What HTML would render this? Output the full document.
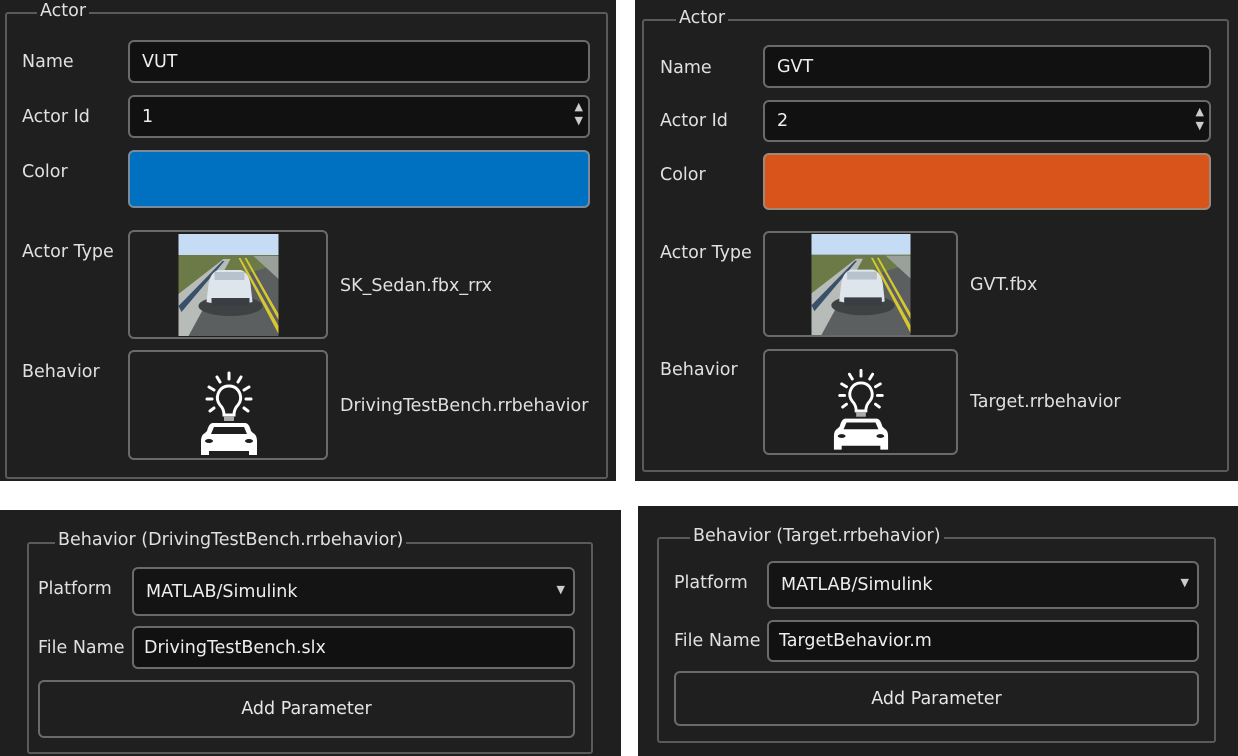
<!DOCTYPE html>
<html><head><meta charset="utf-8"><style>
*{box-sizing:border-box;margin:0;padding:0}
body{width:1238px;height:756px;background:#fff;position:relative;overflow:hidden;font-family:"DejaVu Sans","Liberation Sans",sans-serif;font-size:17.5px;color:#e6e6e6}
.a{position:absolute}
.p{position:absolute;background:#1f1f1f}
.g{position:absolute;border:2px solid #5a5a5a;border-radius:3px}
.gl{position:absolute;background:#1f1f1f;padding:0 3px;line-height:20px;color:#e0e0e0}
.f{position:absolute;background:#111;border:2px solid #6a6a6a;border-radius:6px;padding-left:12px;display:flex;align-items:center;color:#eee}
.b{position:absolute;border:2px solid #6a6a6a;border-radius:6px;background:#1f1f1f}
.l{position:absolute;line-height:20px;color:#e0e0e0}
.btn{position:absolute;border:2px solid #6a6a6a;border-radius:6px;display:flex;align-items:center;justify-content:center;color:#e6e6e6}
</style></head><body>
<svg width="0" height="0" style="position:absolute">
<defs>
<symbol id="scene" viewBox="0 0 100 102">
<rect width="100" height="102" fill="#5b5f5f"/>
<rect width="100" height="21" fill="#c6dcf5"/>
<polygon points="0,21 100,21 100,30 0,60" fill="#6c7a48"/>
<polygon points="0,60 45,25 52,25 10,102 0,102" fill="#b8bcb8"/>
<polygon points="0,72 44,27 46,27 3,78" fill="#38506a"/>
<polygon points="60,24 62,24 100,92 100,100" fill="#d8c830"/>
<polygon points="66,24 68,24 100,80 100,86" fill="#d8c830"/>
<polygon points="75,22 100,22 100,45" fill="#9aa09a"/>
<ellipse cx="52" cy="72" rx="32" ry="10" fill="#3e4242"/>
<path d="M30 50 Q32 38 40 36 L62 36 Q70 38 72 50 L74 68 Q52 74 28 68Z" fill="#dfe5ec"/>
<rect x="36" y="38" width="30" height="8" fill="#b8c2cc"/>
<rect x="33" y="64" width="38" height="8" fill="#3a3e44"/>
</symbol>
<symbol id="beh" viewBox="0 0 60 84">
<g stroke="#fff" stroke-width="3" fill="none" stroke-linecap="round">
<line x1="30" y1="2" x2="30" y2="8"/><line x1="18" y1="6" x2="21" y2="11"/><line x1="42" y1="6" x2="39" y2="11"/>
<line x1="10" y1="16" x2="15" y2="19"/><line x1="50" y1="16" x2="45" y2="19"/>
<line x1="8" y1="28" x2="13" y2="28"/><line x1="52" y1="28" x2="47" y2="28"/>
<line x1="11" y1="40" x2="15" y2="37"/><line x1="49" y1="40" x2="45" y2="37"/>
<path d="M25 44 Q25 38 21 34 Q17 29 19 23 Q22 15 30 15 Q38 15 41 23 Q43 29 39 34 Q35 38 35 44Z"/>
</g>
<rect x="25" y="45" width="10" height="5" fill="#aaa"/>
<path d="M14 52 L46 52 Q50 52 52 60 L54 62 Q58 64 58 70 L58 84 L50 84 L50 80 L10 80 L10 84 L2 84 L2 70 Q2 64 6 62 L8 60 Q10 52 14 52Z" fill="#fff"/>
<path d="M15 56 L45 56 L48 63 L12 63Z" fill="#1f1f1f"/>
<ellipse cx="10" cy="70" rx="4" ry="2" fill="#1f1f1f"/><ellipse cx="50" cy="70" rx="4" ry="2" fill="#1f1f1f"/>
</symbol>
</defs></svg>

<div class="p" style="left:0;top:0;width:616px;height:481px"></div>
<div class="g" style="left:5px;top:12px;width:603px;height:467px"></div>
<div class="gl" style="left:37px;top:1px">Actor</div>
<div class="l" style="left:22px;top:52px">Name</div>
<div class="f" style="left:128px;top:40px;width:462px;height:43px">VUT</div>
<div class="l" style="left:22px;top:107px">Actor Id</div>
<div class="f" style="left:128px;top:95px;width:462px;height:43px">1<span class="a" style="right:5px;top:3px;font-size:11px;line-height:14px;color:#ccc">▲<br>▼</span></div>
<div class="l" style="left:22px;top:162px">Color</div>
<div class="a" style="left:128px;top:150px;width:462px;height:58px;background:#0070c0;border:2px solid #7a8a9a;border-radius:6px"></div>
<div class="l" style="left:22px;top:242px">Actor Type</div>
<div class="b" style="left:128px;top:230px;width:200px;height:109px"></div>
<svg class="a" style="left:178px;top:234px" width="101" height="102"><use href="#scene"/></svg>
<div class="l" style="left:340px;top:276px">SK_Sedan.fbx_rrx</div>
<div class="l" style="left:22px;top:362px">Behavior</div>
<div class="b" style="left:128px;top:350px;width:200px;height:110px"></div>
<svg class="a" style="left:199px;top:371px" width="60" height="84"><use href="#beh"/></svg>
<div class="l" style="left:340px;top:396px">DrivingTestBench.rrbehavior</div>

<div class="p" style="left:635px;top:0;width:603px;height:481px"></div>
<div class="g" style="left:642px;top:19px;width:587px;height:453px"></div>
<div class="gl" style="left:676px;top:8px">Actor</div>
<div class="l" style="left:660px;top:58px">Name</div>
<div class="f" style="left:763px;top:45px;width:448px;height:43px">GVT</div>
<div class="l" style="left:660px;top:111px">Actor Id</div>
<div class="f" style="left:763px;top:100px;width:448px;height:42px">2<span class="a" style="right:5px;top:3px;font-size:11px;line-height:14px;color:#ccc">▲<br>▼</span></div>
<div class="l" style="left:660px;top:165px">Color</div>
<div class="a" style="left:763px;top:153px;width:448px;height:57px;background:#d9541a;border:2px solid #9a8a7a;border-radius:6px"></div>
<div class="l" style="left:660px;top:243px">Actor Type</div>
<div class="b" style="left:763px;top:231px;width:195px;height:106px"></div>
<svg class="a" style="left:811px;top:234px" width="100" height="101"><use href="#scene"/></svg>
<div class="l" style="left:970px;top:275px">GVT.fbx</div>
<div class="l" style="left:660px;top:360px">Behavior</div>
<div class="b" style="left:763px;top:349px;width:195px;height:106px"></div>
<svg class="a" style="left:832px;top:368px" width="58" height="82"><use href="#beh"/></svg>
<div class="l" style="left:970px;top:392px">Target.rrbehavior</div>

<div class="p" style="left:0;top:510px;width:621px;height:246px"></div>
<div class="g" style="left:27px;top:542px;width:566px;height:212px"></div>
<div class="gl" style="left:55px;top:530px">Behavior (DrivingTestBench.rrbehavior)</div>
<div class="l" style="left:38px;top:579px">Platform</div>
<div class="f" style="left:132px;top:567px;width:443px;height:49px;background:#141414">MATLAB/Simulink<span class="a" style="right:8px;top:14px;font-size:11px;color:#ccc">▼</span></div>
<div class="l" style="left:38px;top:638px">File Name</div>
<div class="f" style="left:132px;top:626px;width:443px;height:43px;padding-left:10px">DrivingTestBench.slx</div>
<div class="btn" style="left:38px;top:680px;width:537px;height:58px">Add Parameter</div>

<div class="p" style="left:638px;top:506px;width:600px;height:250px"></div>
<div class="g" style="left:657px;top:537px;width:559px;height:206px"></div>
<div class="gl" style="left:690px;top:526px">Behavior (Target.rrbehavior)</div>
<div class="l" style="left:674px;top:573px">Platform</div>
<div class="f" style="left:767px;top:561px;width:432px;height:48px;background:#141414">MATLAB/Simulink<span class="a" style="right:8px;top:13px;font-size:11px;color:#ccc">▼</span></div>
<div class="l" style="left:674px;top:631px">File Name</div>
<div class="f" style="left:767px;top:620px;width:432px;height:42px;padding-left:10px">TargetBehavior.m</div>
<div class="btn" style="left:674px;top:671px;width:525px;height:55px">Add Parameter</div>
</body></html>
